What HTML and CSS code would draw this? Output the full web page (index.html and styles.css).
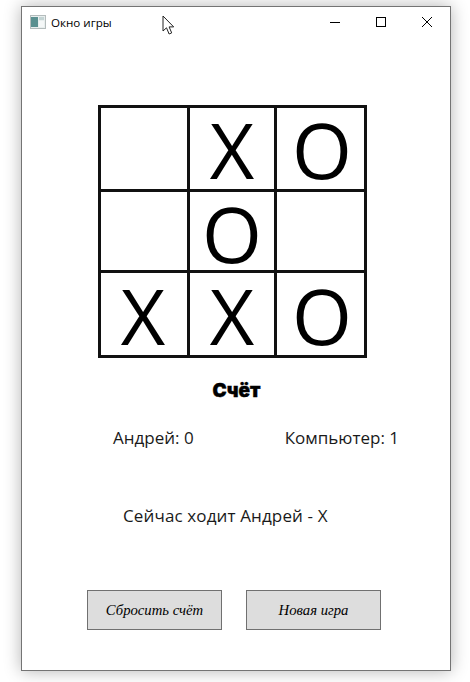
FILE: index.html
```html
<!DOCTYPE html>
<html lang="ru">
<head>
    <meta charset="UTF-8">
    <meta name="viewport" content="width=device-width, initial-scale=1.0">
    <title>Окно игры</title>
    <link rel="stylesheet" href="styles.css">
</head>
<body>
    <div class="window">
        <div class="titlebar">
            <svg class="app-icon" width="16" height="14" viewBox="0 0 16 14">
                <rect x="0.5" y="0.5" width="15" height="13" fill="#e8eeee" stroke="#b4bcbc"/>
                <rect x="1" y="2" width="7" height="10" fill="#5a9090"/>
                <rect x="9" y="2" width="5" height="3" fill="#c4d4d4"/>
                <rect x="9" y="6" width="5" height="6" fill="#f4f7f7"/>
            </svg>
            <span class="title">Окно игры</span>
            <div class="controls">
                <svg width="46" height="30" viewBox="0 0 46 30"><path d="M18 15.5h10" stroke="#000" fill="none"/></svg>
                <svg width="46" height="30" viewBox="0 0 46 30"><rect x="18.5" y="10.5" width="9" height="9" stroke="#000" fill="none"/></svg>
                <svg width="46" height="30" viewBox="0 0 46 30"><path d="M18 10l10 10M28 10l-10 10" stroke="#000" fill="none"/></svg>
            </div>
        </div>

        <div class="board">
            <div class="cell"></div>
            <div class="cell">X</div>
            <div class="cell">O</div>
            <div class="cell"></div>
            <div class="cell">O</div>
            <div class="cell"></div>
            <div class="cell">X</div>
            <div class="cell">X</div>
            <div class="cell">O</div>
        </div>

        <div class="score-title">Счёт</div>
        <div class="score">
            <span>Андрей: 0</span>
            <span>Компьютер: 1</span>
        </div>
        <div class="status">Сейчас ходит Андрей - X</div>

        <div class="buttons">
            <button class="btn">Сбросить счёт</button>
            <button class="btn">Новая игра</button>
        </div>
    </div>

    <!-- mouse pointer over the title bar -->
    <svg class="cursor" width="14" height="21" viewBox="0 0 14 21">
        <path d="M1 1v15l3.5-3.2 2.6 6.2 2.6-1.1-2.6-6h4.6z" fill="#fff" stroke="#222" stroke-width="1"/>
    </svg>
</body>
</html>
```

FILE: styles.css
```css
html, body {
    margin: 0;
    padding: 0;
    background: #fff;
}
body {
    width: 470px;
    height: 682px;
    overflow: hidden;
    position: relative;
    font-family: "Open Sans", "Noto Sans", sans-serif;
    color: #1a1a1a;
}
.window {
    box-sizing: border-box;
    width: 430px;
    height: 665px;
    margin: 6px 0 0 21px;
    background: #fff;
    border: 1px solid #747474;
    box-shadow: 0 0 16px rgba(0, 0, 0, 0.3);
}
.titlebar {
    display: flex;
    align-items: center;
    height: 30px;
}
.app-icon {
    margin-left: 8px;
    flex: none;
}
.title {
    margin-left: 5px;
    font-size: 11.6px;
    color: #000;
}
.controls {
    margin-left: auto;
    display: flex;
}
.board {
    display: grid;
    grid-template-columns: 89px 87px 87px;
    grid-template-rows: 84px 81px 82px;
    width: 269px;
    height: 253px;
    box-sizing: border-box;
    margin: 68px 0 0 76px;
    border: 3px solid #111;
}
.cell {
    box-sizing: border-box;
    padding-top: 7px;
    border-right: 3px solid #111;
    border-bottom: 3px solid #111;
    font-family: "Open Sans", sans-serif;
    font-size: 77px;
    line-height: 70px;
    text-align: center;
    color: #000;
}
.cell:nth-child(3n) {
    border-right: 0;
    padding-left: 3px;
}
.cell:nth-child(3n+1) {
    padding-right: 2px;
}
.cell:nth-child(n+7) {
    padding-top: 8px;
    border-bottom: 0;
}
.score-title {
    margin: 21px 0 0 77px;
    width: 275px;
    text-align: center;
    font-family: "Inter", sans-serif;
    font-size: 19px;
    font-weight: 900;
    line-height: 24px;
    color: #000;
    -webkit-text-stroke: 0.4px #000;
}
.score {
    display: flex;
    justify-content: space-between;
    margin: 23px 0 0 91px;
    width: 286px;
    font-size: 17px;
    line-height: 24px;
}
.status {
    margin: 54px 0 0 101px;
    font-size: 17px;
    letter-spacing: 0.13px;
    line-height: 24px;
}
.buttons {
    display: flex;
    gap: 24px;
    margin: 62px 0 0 65px;
}
.btn {
    box-sizing: border-box;
    width: 135px;
    height: 40px;
    padding: 0;
    background: #dddddd;
    border: 1px solid #707070;
    font-family: "Liberation Serif", serif;
    font-style: italic;
    font-size: 14.7px;
    color: #000;
}
.cursor {
    position: absolute;
    left: 162px;
    top: 15px;
}
```
